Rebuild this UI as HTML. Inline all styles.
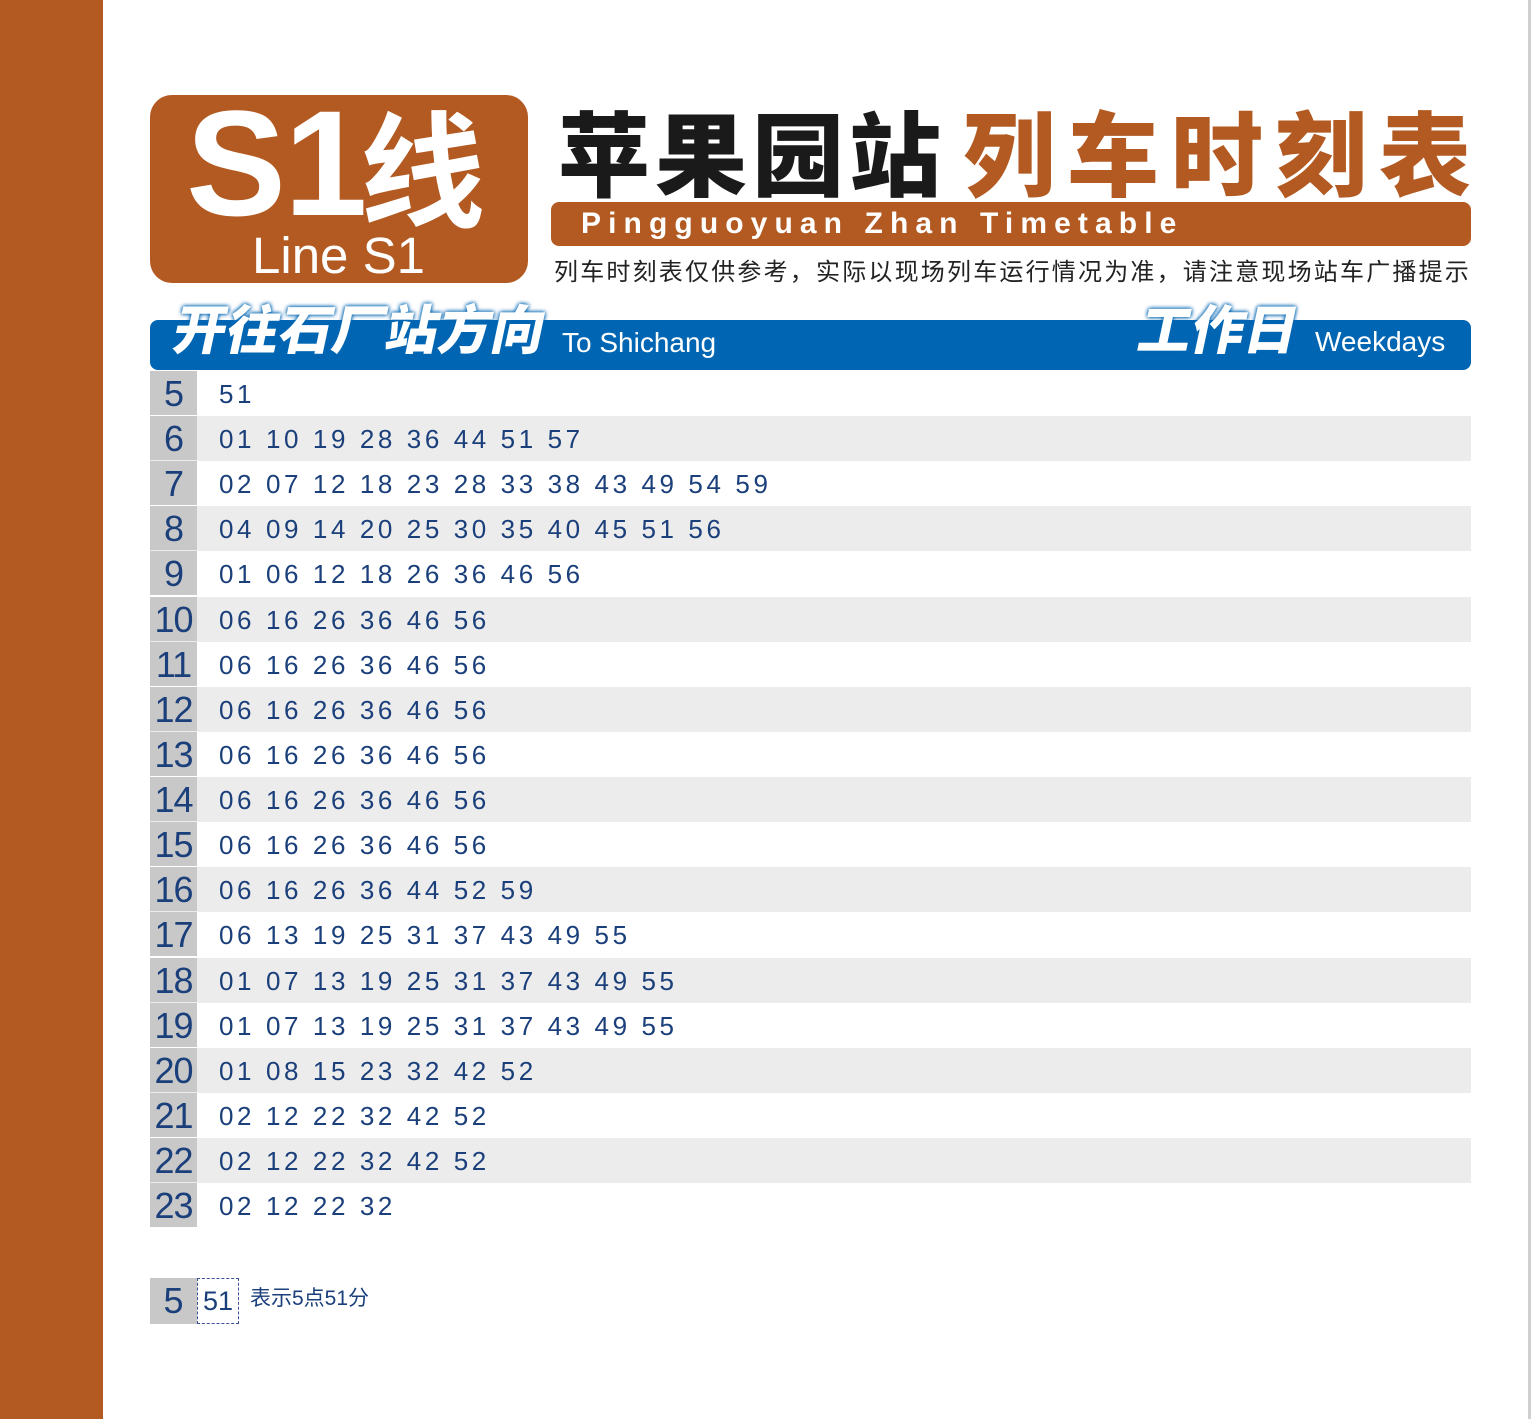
<!DOCTYPE html>
<html><head><meta charset="utf-8"><style>
*{margin:0;padding:0;box-sizing:border-box}
body{width:1531px;height:1419px;background:#fff;position:relative;overflow:hidden;font-family:"Liberation Sans","Noto Sans CJK SC",sans-serif}
.abs{position:absolute;white-space:nowrap}
.or{background:#b35a22}
.row{position:absolute;left:150px;width:1321px;height:45px}
.row .h{position:absolute;left:0;top:0;width:47px;height:44px;background:#c8c8c8;color:#1a3f7a;font-size:36px;text-align:center;line-height:46px;letter-spacing:-1px}
.row .m{position:absolute;left:69px;top:0;line-height:46px;font-size:26px;color:#1a3f7a;letter-spacing:3.6px}
.row.g{background:#ececec}
</style></head><body>
<div class="abs or" style="left:0;top:0;width:103px;height:1419px"></div>
<div class="abs" style="left:1528px;top:0;width:3px;height:1419px;background:#d0d0d0"></div>

<div class="abs or" style="left:150px;top:95px;width:378px;height:188px;border-radius:22px"></div>
<div class="abs" style="left:186px;top:88px;font-size:150px;font-weight:bold;color:#fff;line-height:150px;letter-spacing:-2px">S1</div>
<div class="abs" style="left:360px;top:100px;font-size:125px;font-weight:bold;color:#fff;line-height:125px;font-family:'Noto Sans CJK SC',sans-serif">线</div>
<div class="abs" style="left:252px;top:228px;font-size:51px;color:#fff;line-height:56px">Line S1</div>

<div class="abs" style="left:558px;top:95px;font-size:92px;font-weight:900;color:#1a1a1a;line-height:110px;letter-spacing:5px;font-family:'Noto Sans CJK SC',sans-serif">苹果园站</div>
<div class="abs" style="left:963px;top:95px;font-size:92px;font-weight:900;color:#b35a22;line-height:110px;letter-spacing:12px;font-family:'Noto Sans CJK SC',sans-serif">列车时刻表</div>

<div class="abs or" style="left:551px;top:202px;width:920px;height:44px;border-radius:8px"></div>
<div class="abs" style="left:581px;top:204px;font-size:30px;font-weight:bold;color:#fff;line-height:40px;letter-spacing:7.1px">Pingguoyuan Zhan Timetable</div>
<div class="abs" style="left:554px;top:256px;font-size:24px;color:#222;line-height:34px;letter-spacing:2.2px">列车时刻表仅供参考，实际以现场列车运行情况为准，请注意现场站车广播提示</div>

<div class="abs" style="left:150px;top:320px;width:1321px;height:50px;background:#0066b3;border-radius:8px"></div>
<div class="abs" style="left:175px;top:294px;font-size:53px;font-weight:900;color:#fff;line-height:66px;transform:skewX(-12deg);text-shadow:0 0 4px #0066b3,0 0 4px #0066b3;font-family:'Noto Sans CJK SC',sans-serif">开往石厂站方向</div>
<div class="abs" style="left:562px;top:325px;font-size:28px;color:#fff;line-height:36px">To Shichang</div>
<div class="abs" style="left:1140px;top:294px;font-size:53px;font-weight:900;color:#fff;line-height:66px;transform:skewX(-12deg);text-shadow:0 0 4px #0066b3,0 0 4px #0066b3;font-family:'Noto Sans CJK SC',sans-serif">工作日</div>
<div class="abs" style="left:1315px;top:324px;font-size:28px;color:#fff;line-height:36px">Weekdays</div>

<div class="row" style="top:371px"><div class="h">5</div><div class="m">51</div></div>
<div class="row g" style="top:416px"><div class="h">6</div><div class="m">01 10 19 28 36 44 51 57</div></div>
<div class="row" style="top:461px"><div class="h">7</div><div class="m">02 07 12 18 23 28 33 38 43 49 54 59</div></div>
<div class="row g" style="top:506px"><div class="h">8</div><div class="m">04 09 14 20 25 30 35 40 45 51 56</div></div>
<div class="row" style="top:551px"><div class="h">9</div><div class="m">01 06 12 18 26 36 46 56</div></div>
<div class="row g" style="top:597px"><div class="h">10</div><div class="m">06 16 26 36 46 56</div></div>
<div class="row" style="top:642px"><div class="h">11</div><div class="m">06 16 26 36 46 56</div></div>
<div class="row g" style="top:687px"><div class="h">12</div><div class="m">06 16 26 36 46 56</div></div>
<div class="row" style="top:732px"><div class="h">13</div><div class="m">06 16 26 36 46 56</div></div>
<div class="row g" style="top:777px"><div class="h">14</div><div class="m">06 16 26 36 46 56</div></div>
<div class="row" style="top:822px"><div class="h">15</div><div class="m">06 16 26 36 46 56</div></div>
<div class="row g" style="top:867px"><div class="h">16</div><div class="m">06 16 26 36 44 52 59</div></div>
<div class="row" style="top:912px"><div class="h">17</div><div class="m">06 13 19 25 31 37 43 49 55</div></div>
<div class="row g" style="top:958px"><div class="h">18</div><div class="m">01 07 13 19 25 31 37 43 49 55</div></div>
<div class="row" style="top:1003px"><div class="h">19</div><div class="m">01 07 13 19 25 31 37 43 49 55</div></div>
<div class="row g" style="top:1048px"><div class="h">20</div><div class="m">01 08 15 23 32 42 52</div></div>
<div class="row" style="top:1093px"><div class="h">21</div><div class="m">02 12 22 32 42 52</div></div>
<div class="row g" style="top:1138px"><div class="h">22</div><div class="m">02 12 22 32 42 52</div></div>
<div class="row" style="top:1183px"><div class="h">23</div><div class="m">02 12 22 32</div></div>

<div class="abs" style="left:150px;top:1278px;width:47px;height:46px;background:#c8c8c8;color:#1a3f7a;font-size:36px;text-align:center;line-height:46px">5</div>
<div class="abs" style="left:197px;top:1278px;width:42px;height:46px;border:1.5px dashed #3a4f9a;color:#1a3f7a;font-size:27px;text-align:center;line-height:44px">51</div>
<div class="abs" style="left:250px;top:1284px;font-size:21px;color:#1a3f7a;line-height:30px">表示5点51分</div>
</body></html>
